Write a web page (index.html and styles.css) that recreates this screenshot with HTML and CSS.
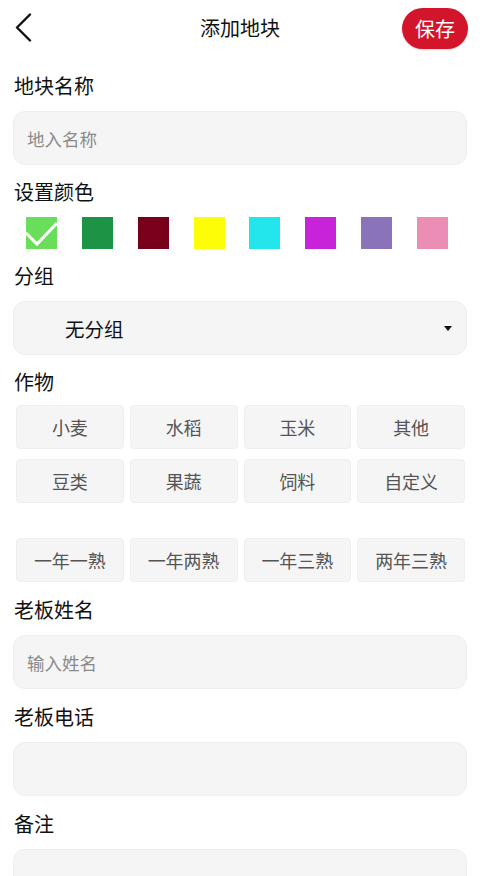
FILE: index.html
```html
<!DOCTYPE html>
<html lang="zh">
<head>
<meta charset="utf-8">
<link rel="stylesheet" href="styles.css">
</head>
<body>
<div class="page">
  <header class="topbar">
    <svg class="back" width="20" height="30" viewBox="0 0 20 30"><polyline points="15,1.5 2,14.5 15,27.5" fill="none" stroke="#111" stroke-width="2.4" stroke-linecap="round" stroke-linejoin="round"/></svg>
    <div class="title">添加地块</div>
    <button class="save">保存</button>
  </header>

  <main class="form">
    <div class="label first">地块名称</div>
    <div class="input"><span class="ph">地入名称</span></div>

    <div class="label">设置颜色</div>
    <div class="swatches">
      <div class="sw" style="background:#6ade5a">
        <svg width="31" height="32" viewBox="0 0 31 32"><polyline points="0,16 11,27 31,6" fill="none" stroke="#fff" stroke-width="3"/></svg>
      </div>
      <div class="sw" style="background:#1d9445"></div>
      <div class="sw" style="background:#78001a"></div>
      <div class="sw" style="background:#fdfd08"></div>
      <div class="sw" style="background:#22e6ec"></div>
      <div class="sw" style="background:#c923da"></div>
      <div class="sw" style="background:#8a73b8"></div>
      <div class="sw" style="background:#ec8db6"></div>
    </div>

    <div class="label">分组</div>
    <div class="input select"><span class="val">无分组</span><span class="caret"></span></div>

    <div class="label crops-label">作物</div>
    <div class="crops">
      <div class="chip">小麦</div>
      <div class="chip">水稻</div>
      <div class="chip">玉米</div>
      <div class="chip">其他</div>
      <div class="chip">豆类</div>
      <div class="chip">果蔬</div>
      <div class="chip">饲料</div>
      <div class="chip">自定义</div>
    </div>
    <div class="crops seasons">
      <div class="chip">一年一熟</div>
      <div class="chip">一年两熟</div>
      <div class="chip">一年三熟</div>
      <div class="chip">两年三熟</div>
    </div>

    <div class="label lower">老板姓名</div>
    <div class="input"><span class="ph">输入姓名</span></div>

    <div class="label lower">老板电话</div>
    <div class="input"></div>

    <div class="label lower">备注</div>
    <div class="input"></div>
  </main>
</div>
</body>
</html>
```

FILE: styles.css
```css
* { box-sizing: border-box; }
html, body { margin: 0; padding: 0; background: #fff; }
body {
  font-family: "Noto Sans CJK SC", "Noto Sans", sans-serif;
  color: #111;
  width: 480px;
  height: 876px;
  overflow: hidden;
}
.topbar {
  height: 56px;
  display: flex;
  align-items: center;
  justify-content: space-between;
  padding: 0 12px 0 15px;
  position: relative;
}
.back { display: block; }
.title {
  position: absolute;
  left: 0; right: 0;
  text-align: center;
  font-size: 20px;
  line-height: 56px;
  pointer-events: none;
}
.save {
  width: 66px;
  height: 41px;
  border: none;
  border-radius: 21px;
  background: #d3152b;
  color: #fff;
  font-family: inherit;
  font-size: 20px;
  padding: 0;
  box-shadow: 0 1px 2px rgba(0,0,0,0.15);
}
.form {
  padding: 0 13px;
  display: flex;
  flex-direction: column;
}
.label {
  font-size: 20px;
  line-height: 24px;
  height: 24px;
  margin-top: 15px;
  margin-bottom: 13px;
  padding-left: 1px;
}
.label.first { margin-top: 18px; }
.label.lower { margin-top: 16px; }
.input {
  height: 54px;
  border-radius: 12px;
  background: #f5f5f5;
  border: 1px solid #eeeeee;
  display: flex;
  align-items: center;
  padding-left: 13px;
}
.ph { font-size: 17.5px; color: #8a8a8a; }
.swatches {
  display: flex;
  justify-content: space-between;
  padding: 0 19px 0 13px;
  height: 32px;
}
.sw { width: 31px; height: 32px; }
.sw svg { display: block; }
.select { padding-left: 51px; justify-content: space-between; padding-right: 14px; }
.val { font-size: 19.5px; color: #111; }
.caret {
  width: 0; height: 0;
  border-left: 4.5px solid transparent;
  border-right: 4.5px solid transparent;
  border-top: 5px solid #111;
}
.label.crops-label { margin-bottom: 11px; }
.crops {
  display: grid;
  grid-template-columns: repeat(4, 1fr);
  column-gap: 6px;
  row-gap: 10px;
  padding: 0 2px 0 3px;
}
.seasons { margin-top: 35px; }
.chip {
  height: 44px;
  background: #f5f5f5;
  border-radius: 4px;
  border: 1px solid #efefef;
  display: flex;
  align-items: center;
  justify-content: center;
  font-size: 18px;
  color: #555;
}
```
